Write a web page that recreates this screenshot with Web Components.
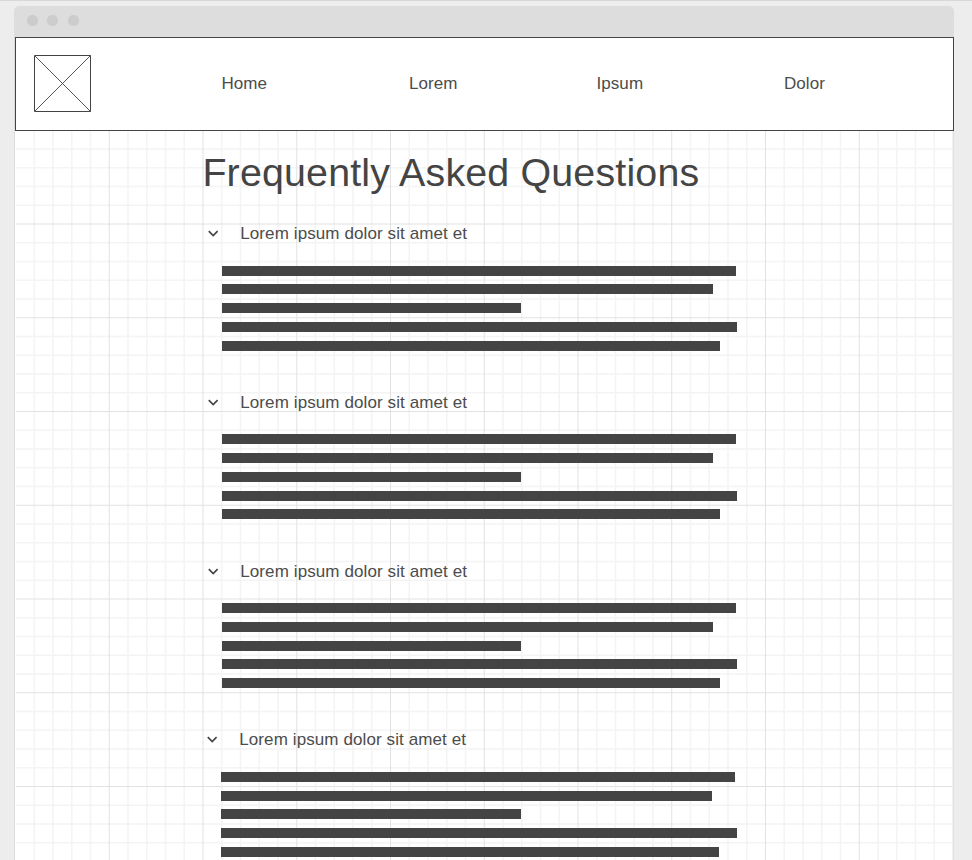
<!DOCTYPE html>
<html lang="en"><head><meta charset="utf-8"><title>Frequently Asked Questions</title>
<style>
html,body{margin:0;height:860px;overflow:hidden;background:#ededed}
body{font-family:"Liberation Sans",Arial,sans-serif;color:#444}
</style></head><body>
<browser-window>
  <site-header slot="header">
    <nav-link>Home</nav-link><nav-link>Lorem</nav-link><nav-link>Ipsum</nav-link><nav-link>Dolor</nav-link>
  </site-header>
  <page-title>Frequently Asked Questions</page-title>
  <faq-item>Lorem ipsum dolor sit amet et</faq-item>
  <faq-item>Lorem ipsum dolor sit amet et</faq-item>
  <faq-item>Lorem ipsum dolor sit amet et</faq-item>
  <faq-item class="last">Lorem ipsum dolor sit amet et</faq-item>
</browser-window>
<script>
function define(name, html) {
  customElements.define(name, class extends HTMLElement {
    constructor() {
      super();
      this.attachShadow({mode: 'open'}).innerHTML = html;
    }
  });
}

// Grid lines: 18.75px pitch, every fifth one is stronger.
function gridLines() {
  let minor = '', major = '';
  for (let i = 1; i <= 50; i++) {
    const p = i * 18.75, v = `M${p + 1.5} 0V823`, h = `M2 ${p - .5}H938`;
    if (i % 5) minor += v + h; else major += v + h;
  }
  return `<path d="${minor}" stroke="#f4f4f4" stroke-width="1.5"/><path d="${major}" stroke="#e2e2e2"/>`;
}

define('browser-window', `<style>
:host{display:flex;flex-direction:column;box-sizing:border-box;height:860px;padding:5px 18px 0 14px;border-top:1px solid #d8d8d8;overflow:hidden}
.bar{flex:none;box-sizing:border-box;height:31px;background:#ddd;border-radius:5px 5px 0 0;display:flex;padding:9px 0 0 13px}
.bar svg{display:block}
.page{flex:none;display:grid;width:940px;height:823px;background:#fff}
.grid,.content{grid-area:1/1;min-width:0}
.grid{display:block;box-shadow:inset 1px 0 #dcdcdc,inset -1px 0 #dfdfdf}
.content{padding-left:1px;z-index:1}
</style>
<div class="bar"><svg width="54" height="12" fill="#ccc"><circle cx="5.5" cy="5.5" r="5.6"/><circle cx="25.5" cy="5.5" r="5.6"/><circle cx="46.5" cy="5.5" r="5.6"/></svg></div>
<div class="page"><svg class="grid" width="940" height="823" fill="none">${gridLines()}</svg>
<div class="content"><slot name="header"></slot><slot></slot></div></div>`);

define('image-placeholder', `<style>:host{display:block;width:57px;height:57px}svg{display:block}</style>
<svg width="57" height="57" fill="none" stroke="#444"><path d="M.5.5h56v56H.5z"/><path d="M1 1l55.5 55.5M56.5.5L1 56" stroke-width=".9"/></svg>`);

define('site-header', `<style>
:host{display:flex;align-items:center;box-sizing:border-box;width:939px;height:94px;background:#fff;border:1px solid #444;padding-left:18px}
image-placeholder{margin-bottom:1px}
nav{display:grid;grid-template-columns:repeat(4,187.5px);margin-left:130.4px}
</style><image-placeholder></image-placeholder><nav><slot></slot></nav>`);

define('nav-link', `<style>:host{display:block;font-size:17px;line-height:20px;letter-spacing:.1px;color:#4c4c4c}</style><slot></slot>`);

define('page-title', `<style>:host{display:block;font-size:39.375px;line-height:46px;padding:18px 0 0 187.4px;height:89px;box-sizing:border-box;white-space:nowrap;letter-spacing:.18px}
h1{font:inherit;margin:0}</style><h1><slot></slot></h1>`);

define('faq-item', `<style>
:host{display:block;height:168.75px;padding-left:206.75px;box-sizing:border-box}
:host(.last){padding-left:206.35px}
header{display:flex;height:45.6px;margin-left:-14px}
:host(.last) header{margin-left:-14.6px}
svg{display:block;margin-top:10px}
span{margin-left:21.5px;padding-top:4px;font-size:17px;line-height:20px;letter-spacing:.1px;white-space:nowrap;color:#4c4c4c}
i{display:block;height:10px;margin-bottom:8.75px;background:#444}
i:nth-of-type(1){width:513.85px}i:nth-of-type(2){width:490.85px}i:nth-of-type(3){width:299.35px}i:nth-of-type(4){width:515.35px}i:nth-of-type(5){width:497.85px}
</style><header><svg width="11" height="8" fill="none" stroke="#444" stroke-width="1.7"><path d="M.8 1.2L5.2 5.5L9.6 1.2"/></svg><span><slot></slot></span></header>
<i></i><i></i><i></i><i></i><i></i>`);
</script>
</body></html>
